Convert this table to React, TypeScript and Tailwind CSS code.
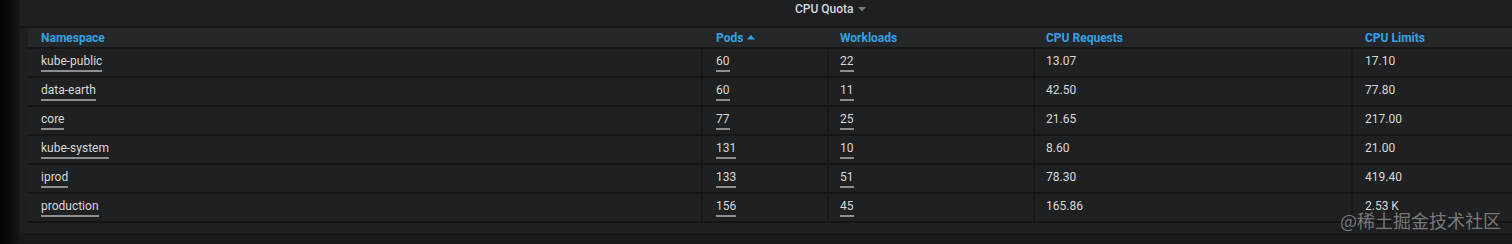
import React from "react";

const rows = [
  ["kube-public", "60", "22", "13.07", "17.10"],
  ["data-earth", "60", "11", "42.50", "77.80"],
  ["core", "77", "25", "21.65", "217.00"],
  ["kube-system", "131", "10", "8.60", "21.00"],
  ["iprod", "133", "51", "78.30", "419.40"],
  ["production", "156", "45", "165.86", "2.53 K"],
];

const cols = "grid grid-cols-[675px_126px_206px_318px_1fr]";

function Link({ children }: { children: React.ReactNode }) {
  return (
    <span className="inline-block leading-[14px] border-b-2 border-[#8e8e90] pb-[2px] mb-[-4px]">{children}</span>
  );
}

export default function App() {
  return (
    <div
      className="w-[1512px] h-[244px] bg-[#18191b] flex overflow-hidden relative"
      style={{ fontFamily: "Roboto, 'Liberation Sans', sans-serif" }}
    >
      <div className="w-[20px] shrink-0 bg-gradient-to-r from-[#050506] via-[#0c0c0e] to-[#17181a]" />
      <div className="flex-1 flex flex-col">
        <div className="bg-[#1e1f21] flex flex-col">
          <div className="h-[26px] flex items-start pl-[775px] pt-[1px]">
            <span className="text-[12px] font-medium text-[#d8d9da] leading-[14px] mt-[1px] flex items-center gap-[4px]">
              CPU Quota
              <svg width="8" height="5" viewBox="0 0 8 5"><path d="M0 0 L8 0 L4 4.5 Z" fill="#7b7c7f" /></svg>
            </span>
          </div>
          <div className="h-[2px] bg-[#17181a]" />
          <div className="pl-[8px] pb-[10px]">
            <div className={`${cols} h-[19px] bg-[#252629] items-center text-[12px] font-bold text-[#33a2e5]`}>
              <div className="pl-[13px]">Namespace</div>
              <div className="pl-[13px] flex items-center gap-[4px]">
                Pods
                <svg width="8" height="5" viewBox="0 0 8 5"><path d="M0 4.5 L8 4.5 L4 0 Z" fill="#33a2e5" /></svg>
              </div>
              <div className="pl-[11px]">Workloads</div>
              <div className="pl-[11px]">CPU Requests</div>
              <div className="pl-[12px]">CPU Limits</div>
            </div>
            {rows.map((r, i) => (
              <div
                key={i}
                className={`${cols} h-[29px] bg-[#1f2022] border-t-[2px] border-[#151618] text-[12px] leading-[14px] text-[#d8d9da]`}
              >
                <div className="border-r-2 border-[#18191b] pl-[13px] pb-[3px] flex items-center"><Link>{r[0]}</Link></div>
                <div className="border-r-2 border-[#18191b] pl-[13px] pb-[3px] flex items-center"><Link>{r[1]}</Link></div>
                <div className="border-r-2 border-[#18191b] pl-[11px] pb-[3px] flex items-center"><Link>{r[2]}</Link></div>
                <div className="border-r-2 border-[#18191b] pl-[11px] pb-[3px] flex items-center">{r[3]}</div>
                <div className="pl-[12px] pb-[3px] flex items-center">{r[4]}</div>
              </div>
            ))}
            <div className="h-[2px] bg-[#151618]" />
          </div>
        </div>
      </div>
      <div
        className="absolute left-[1340px] top-[208px] text-[18px] text-[#8f9093] leading-[24px] opacity-80"
        style={{ fontFamily: "'Noto Sans CJK SC', sans-serif" }}
      >
        @稀土掘金技术社区
      </div>
    </div>
  );
}
